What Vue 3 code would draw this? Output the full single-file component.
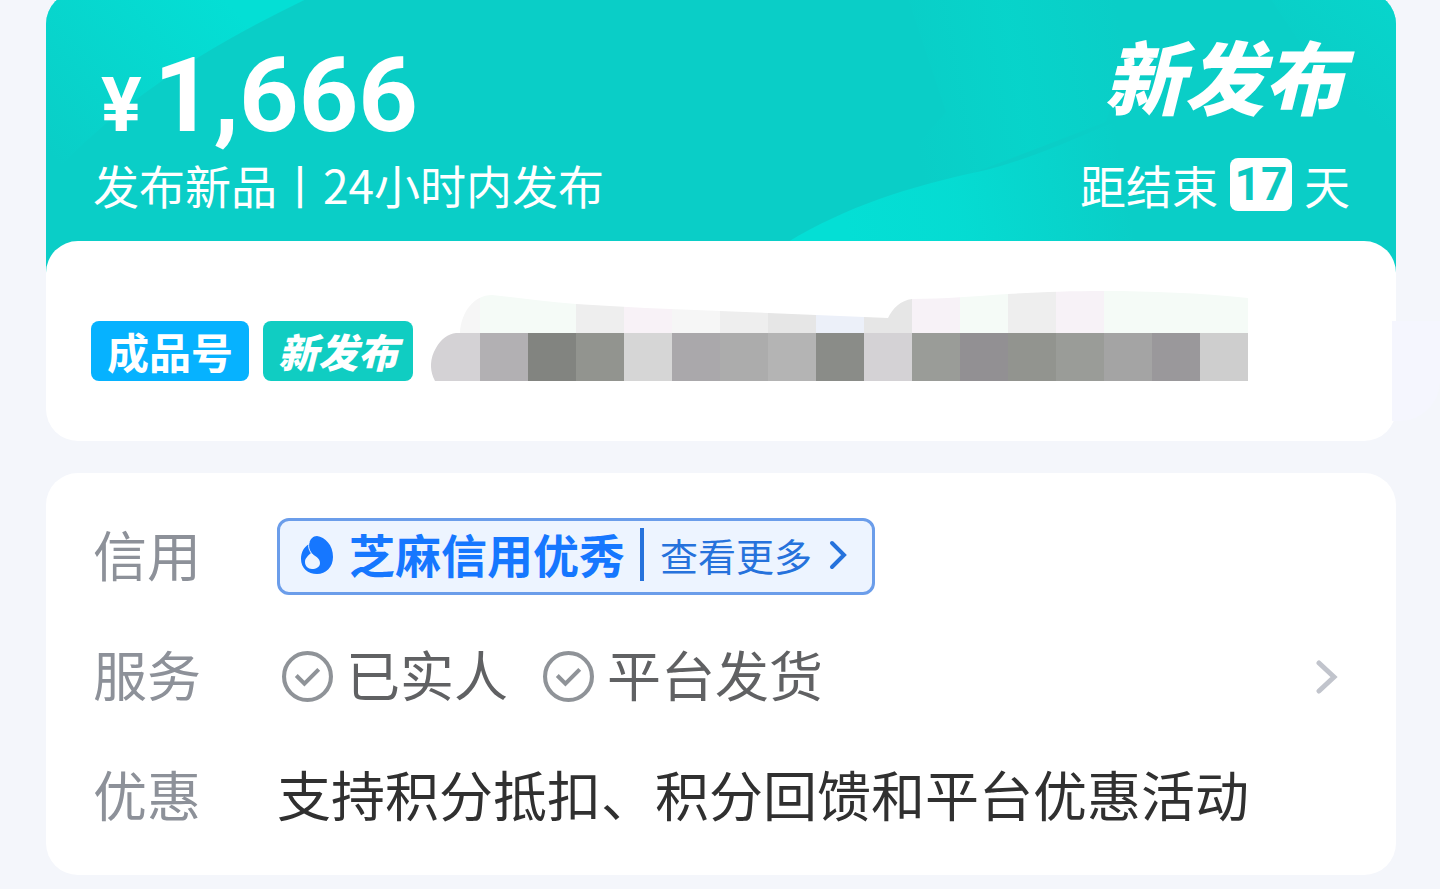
<script setup>
const services = ['已实人', '平台发货']

// mosaic over the item title, cells are 48px wide: [x, width, color]
const upperCells = [
  [456, 24, '#f6f6f6'],
  [480, 96, '#f5fbf7'],
  [576, 48, '#eeeeee'],
  [624, 48, '#f8f2f7'],
  [672, 48, '#f6f6f6'],
  [720, 48, '#eeeeee'],
  [768, 48, '#e6e6e6'],
  [816, 48, '#ecf0f9'],
  [864, 48, '#e6e6e6'],
  [912, 48, '#f7f2f7'],
  [960, 48, '#f5fbf7'],
  [1008, 48, '#eeeeee'],
  [1056, 48, '#f7f2f7'],
  [1104, 144, '#f5fbf7'],
]

const lowerColors = [
  '#d4d2d5', '#b2b0b3', '#828480', '#92948f', '#d6d6d6', '#aaa8ab',
  '#acacac', '#b4b4b4', '#8a8c88', '#d4d2d5', '#9a9c98', '#929093',
  '#92948f', '#9a9c98', '#a4a4a4', '#9a989b', '#cecece',
]
</script>

<template>
  <main class="page">
    <header class="hero">
      <svg class="hero__bg" viewBox="0 0 1350 296" preserveAspectRatio="none" aria-hidden="true">
        <defs>
          <linearGradient id="glowLeft" gradientUnits="userSpaceOnUse" x1="200" y1="30" x2="30" y2="190">
            <stop offset="0" stop-color="#04dfd5" />
            <stop offset="1" stop-color="#04dfd5" stop-opacity="0" />
          </linearGradient>
          <linearGradient id="glowRight" gradientUnits="userSpaceOnUse" x1="800" y1="240" x2="1080" y2="190">
            <stop offset="0" stop-color="#04dfd5" />
            <stop offset="0.4" stop-color="#04dfd5" stop-opacity="0.8" />
            <stop offset="1" stop-color="#04dfd5" stop-opacity="0" />
          </linearGradient>
          <linearGradient id="glowSoft" gradientUnits="userSpaceOnUse" x1="860" y1="100" x2="1080" y2="60">
            <stop offset="0" stop-color="#06d6cc" stop-opacity="0" />
            <stop offset="0.5" stop-color="#06d6cc" stop-opacity="0.7" />
            <stop offset="1" stop-color="#06d6cc" stop-opacity="0" />
          </linearGradient>
          <linearGradient id="glowCorner" gradientUnits="userSpaceOnUse" x1="1280" y1="90" x2="1350" y2="10">
            <stop offset="0" stop-color="#06d8ce" stop-opacity="0" />
            <stop offset="1" stop-color="#06d8ce" stop-opacity="0.7" />
          </linearGradient>
        </defs>
        <path d="M0 0H275C180 45 80 100 0 190Z" fill="url(#glowLeft)" />
        <path d="M860 0H1100L1060 130L800 230L900 120Z" fill="url(#glowSoft)" />
        <path d="M742 250C800 215 860 195 940 178C1010 160 1060 130 1120 110L1240 160L1100 296H742Z" fill="url(#glowRight)" />
        <path d="M1220 0H1350V150L1280 90Z" fill="url(#glowCorner)" />
      </svg>
      <div class="hero__main">
        <p class="price"><span class="price__sign">¥</span><span class="price__value">1,666</span></p>
        <p class="hero__text">发布新品丨24小时内发布</p>
      </div>
      <div class="hero__side">
        <h1 class="hero__title">新发布</h1>
        <p class="hero__text countdown">
          <span>距结束</span>
          <strong class="countdown__days">17</strong>
          <span>天</span>
        </p>
      </div>
    </header>

    <section class="card item">
      <span class="tag tag--blue">成品号</span>
      <span class="tag tag--teal">新发布</span>
      <svg class="mosaic" viewBox="431 290 817 91" aria-hidden="true">
        <defs>
          <clipPath id="mosaicShape">
            <path d="M460 333C461 312 474 295 492 295C520 298 548 302 576 304C620 307 670 309 720 311L816 315L888 318C892 309 901 300 912 299C945 299 975 296 1008 294C1040 292 1070 291 1104 291C1150 291 1200 293 1248 298V381H435C429 370 430 358 436 348C441 339 448 334 456 333Z" />
          </clipPath>
        </defs>
        <g clip-path="url(#mosaicShape)" shape-rendering="crispEdges">
          <rect v-for="cell in upperCells" :key="cell[0]" :x="cell[0]" y="290" :width="cell[1]" height="43" :fill="cell[2]" />
          <rect v-for="(color, i) in lowerColors" :key="i" :x="432 + i * 48 - (i ? 0 : 2)" y="333" :width="i ? 48 : 50" height="48" :fill="color" />
        </g>
      </svg>
      <span class="item__patch"></span>
    </section>

    <section class="card details">
      <div class="row">
        <span class="row__label">信用</span>
        <a class="credit" href="#">
          <svg class="credit__logo" viewBox="0 0 32 38" aria-hidden="true">
            <path d="M8 8C9 3 12 0 16 0C24 1 32 9 32 21C32 31 25 38 16 38C7 38 0 32 0 23C0 16 3 11 8 8Z" fill="#1677ff" />
            <path d="M10 17C14 20 19 22 19 27C19 31 15 33 11 33C7 33 4 30 4 26C4 22 7 20 10 17Z" fill="#edf4ff" />
            <path d="M8 6C7 11 8 15 12 19" fill="none" stroke="#edf4ff" stroke-width="1" />
          </svg>
          <strong class="credit__name">芝麻信用优秀</strong>
          <span class="credit__more">查看更多</span>
          <svg class="credit__arrow" viewBox="0 0 20 32" aria-hidden="true">
            <path d="M4 4L16 16L4 28" fill="none" stroke="#2672dc" stroke-width="4" stroke-linecap="round" />
          </svg>
        </a>
      </div>
      <button type="button" class="row">
        <span class="row__label">服务</span>
        <span class="services">
          <span v-for="name in services" :key="name" class="service">
            <svg class="service__icon" viewBox="0 0 50 50" aria-hidden="true">
              <circle cx="25" cy="25" r="23" fill="none" stroke="#8f9398" stroke-width="4" />
              <path d="M14 24L22 32L36 18" fill="none" stroke="#8f9398" stroke-width="4" />
            </svg>
            <span class="service__name">{{ name }}</span>
          </span>
        </span>
        <svg class="row__arrow" viewBox="0 0 22 36" aria-hidden="true">
          <path d="M3 4L18 18L3 32" fill="none" stroke="#c1c4cc" stroke-width="5" stroke-linecap="round" />
        </svg>
      </button>
      <div class="row">
        <span class="row__label">优惠</span>
        <span class="row__value">支持积分抵扣、积分回馈和平台优惠活动</span>
      </div>
    </section>
  </main>
</template>

<style>
body {
  margin: 0;
  background: #f4f6fb;
}
</style>

<style scoped>
.page {
  display: flow-root;
  margin-top: -8px;
  padding: 0 44px 14px 46px;
  font-family: 'Noto Sans CJK SC', sans-serif;
}

p,
h1 {
  margin: 0;
}

.hero {
  position: relative;
  display: flex;
  justify-content: space-between;
  padding: 40px 46px 76px 47px;
  border-radius: 32px 32px 0 0;
  background: #0acec7;
  color: #fff;
  overflow: hidden;
}

.hero__bg {
  position: absolute;
  inset: 0;
  width: 100%;
  height: 100%;
}

.hero__main,
.hero__side {
  position: relative;
}

.hero__side {
  display: flex;
  flex-direction: column;
  align-items: flex-end;
}

.price {
  display: flex;
  align-items: baseline;
  gap: 12px;
  height: 124px;
  padding-left: 8px;
  font-family: Roboto, sans-serif;
  font-weight: 700;
  line-height: 128px;
}

.price__sign {
  font-size: 76px;
}

.price__value {
  font-size: 104px;
}

.hero__text {
  font-size: 46px;
  line-height: 56px;
}

.hero__title {
  height: 124px;
  padding-right: 6px;
  font-size: 80px;
  font-weight: 900;
  font-style: italic;
  line-height: 84px;
}

.countdown {
  display: flex;
  align-items: center;
  gap: 12px;
}

.countdown__days {
  width: 62px;
  border-radius: 8px;
  background: #fff;
  color: #0cc8c0;
  font-family: Roboto, sans-serif;
  font-size: 46px;
  font-weight: 700;
  line-height: 53px;
  text-align: center;
}

.card {
  border-radius: 32px;
  background: #fff;
}

.item {
  position: relative;
  display: flex;
  align-items: flex-end;
  gap: 14px;
  margin-top: -47px;
  padding: 49px 45px 60px;
}

.tag {
  flex: none;
  padding: 0 16px;
  border-radius: 8px;
  color: #fff;
  font-size: 42px;
  font-weight: 700;
  line-height: 60px;
}

.tag--blue {
  background: #06b2ff;
}

.tag--teal {
  padding: 0 15px;
  background: #10cdc2;
  font-size: 40px;
  font-weight: 900;
  font-style: italic;
}

.mosaic {
  width: 817px;
  min-width: 0;
  margin-left: 4px;
}

.item__patch {
  position: absolute;
  top: 80px;
  right: -44px;
  width: 48px;
  height: 100px;
  border-radius: 0 0 40px 0;
  background: #f5f6fe;
}

.details {
  display: flex;
  flex-direction: column;
  gap: 43px;
  margin-top: 32px;
  padding: 45px 58px 40px 47px;
}

.row {
  display: flex;
  align-items: center;
  width: 100%;
  min-height: 77px;
  padding: 0;
  border: 0;
  background: none;
  font-family: inherit;
  font-size: 54px;
  line-height: 70px;
  text-align: left;
}

.row__label,
.row__value,
.service__name {
  padding-bottom: 6px;
}

.row__label {
  flex: none;
  width: 184px;
  color: #8d9199;
}

.row__value {
  color: #303030;
}

.row__arrow {
  width: 22px;
  height: 36px;
  margin-left: auto;
}

.credit {
  display: flex;
  align-items: center;
  box-sizing: border-box;
  height: 77px;
  padding: 0 24px 4px 21px;
  border: 3px solid #6b9dea;
  border-radius: 12px;
  background: #edf4ff;
  text-decoration: none;
}

.credit__logo {
  width: 32px;
  height: 38px;
}

.credit__name {
  padding: 0 15px 4px 16px;
  color: #1677ff;
  font-size: 46px;
  line-height: 54px;
}

.credit__more {
  padding: 0 16px;
  border-left: 4px solid #2672dc;
  color: #2672dc;
  font-size: 38px;
  line-height: 53px;
}

.credit__arrow {
  width: 20px;
  height: 32px;
}

.services {
  display: flex;
  gap: 35px;
  padding-left: 5px;
}

.service {
  display: flex;
  align-items: center;
  gap: 13px;
  color: #606163;
}

.service__icon {
  width: 51px;
  height: 51px;
}
</style>
